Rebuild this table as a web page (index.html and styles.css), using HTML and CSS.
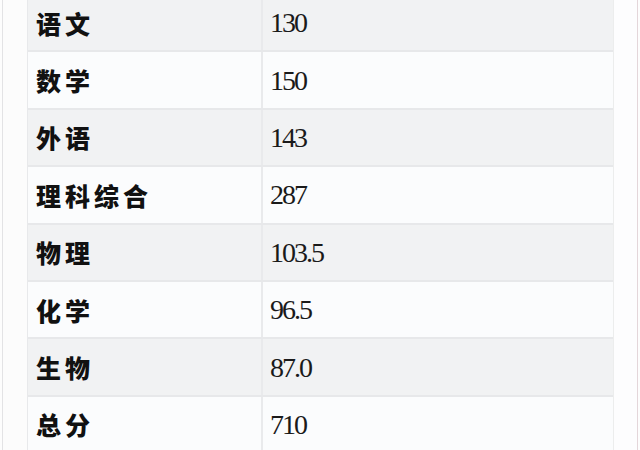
FILE: index.html
```html
<!DOCTYPE html>
<html lang="zh-CN">
<head>
<meta charset="utf-8">
<title>成绩</title>
<link rel="stylesheet" href="styles.css">
</head>
<body>
<div class="page">
  <div class="rail-left"></div>
  <div class="score-table">
    <div class="row odd"><div class="name">语文</div><div class="value">130</div></div>
    <div class="row even"><div class="name">数学</div><div class="value">150</div></div>
    <div class="row odd"><div class="name">外语</div><div class="value">143</div></div>
    <div class="row even"><div class="name">理科综合</div><div class="value">287</div></div>
    <div class="row odd"><div class="name">物理</div><div class="value">103.5</div></div>
    <div class="row even"><div class="name">化学</div><div class="value">96.5</div></div>
    <div class="row odd"><div class="name">生物</div><div class="value">87.0</div></div>
    <div class="row even"><div class="name">总分</div><div class="value">710</div></div>
  </div>
  <div class="rail-right"></div>
</div>
</body>
</html>
```
FILE: styles.css
```css
html, body {
  margin: 0;
  padding: 0;
  background: #fdfdfd;
  overflow: hidden;
}
.page {
  display: flex;
  width: 640px;
  height: 450px;
  overflow: hidden;
}
.rail-left {
  width: 24px;
  margin-left: 2px;
  border-left: 1px solid #e3e3e5;
  background: #fcfcfc;
  flex: none;
}
.score-table {
  width: 585px;
  flex: none;
  margin-top: -5px;
  border-left: 1px solid #e8e9eb;
  border-right: 1px solid #eceded;
}
.row {
  display: grid;
  grid-template-columns: 235px 1fr;
  height: 55.4px;
  border-bottom: 2px solid #e7e8ea;
}
.row.odd { background: #f1f2f3; }
.row.even { background: #fbfcfd; }
.name {
  display: flex;
  align-items: center;
  padding-left: 8px;
  border-right: 2px solid #e9eaec;
  font-family: "Noto Sans CJK SC", sans-serif;
  font-weight: 900;
  font-size: 25px;
  letter-spacing: 4px;
  color: #111;
}
.value {
  display: flex;
  align-items: center;
  padding-left: 7px;
  padding-top: 1px;
  font-family: "Liberation Serif", serif;
  font-size: 28px;
  letter-spacing: -2px;
  color: #1a1a1a;
}
.rail-right {
  width: 23px;
  flex: none;
  background: #fdfdfe;
  border-right: 1px solid #e4d6da;
}
```
